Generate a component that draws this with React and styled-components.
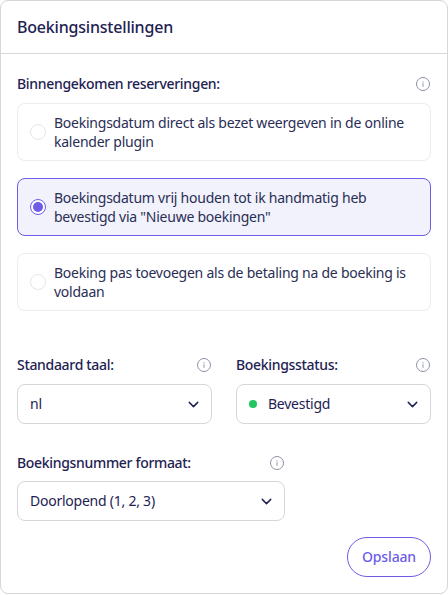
import styled, { createGlobalStyle } from 'styled-components'
import { ChevronDown } from 'lucide-react'

const Global = createGlobalStyle`
  * { box-sizing: border-box; }
  html, body { margin: 0; background: #fff; }
  body { font-family: "Noto Sans", sans-serif; color: #1e2252; letter-spacing: -0.24px; }
`
const Card = styled.div`
  width: 448px;
  height: 594px;
  border: 1px solid #d6d6da;
  border-radius: 8px;
  background: #fff;
  display: flex;
  flex-direction: column;
`
const Header = styled.div`
  height: 53px;
  padding: 0 16px;
  display: flex;
  align-items: center;
  border-bottom: 1px solid #d9d9dd;
  font-size: 16px;
  font-weight: 500;
  letter-spacing: -0.2px;
`
const Body = styled.div`
  flex: 1;
  padding: 19px 16px 0;
  display: flex;
  flex-direction: column;
`
const LabelRow = styled.div`
  height: 22px;
  width: ${p => p.$width || '100%'};
  padding-right: 1px;
  display: flex;
  align-items: center;
  justify-content: space-between;
  font-size: 14px;
  font-weight: 500;
  letter-spacing: -0.32px;
`
const LabelText = styled.span`
  margin-top: -1px;
`
const Options = styled.div`
  margin-top: 8px;
  display: flex;
  flex-direction: column;
  gap: 16.5px;
`
const Option = styled.div`
  height: 58.25px;
  padding: 0 12px;
  display: flex;
  align-items: center;
  gap: 8px;
  border: 1px solid ${p => (p.$active ? '#6c5ce7' : '#ececef')};
  border-radius: 8px;
  background: ${p => (p.$active ? '#f1f2fb' : '#fff')};
  font-size: 14px;
  line-height: 19px;
  color: #2a2e55;
`
const Radio = styled.span`
  flex: none;
  width: 16px;
  height: 16px;
  border-radius: 50%;
  border: 1px solid ${p => (p.$active ? '#6c5ce7' : '#e6e6ea')};
  background: #fff;
  display: flex;
  align-items: center;
  justify-content: center;
  &::after {
    content: '';
    width: 10px;
    height: 10px;
    border-radius: 50%;
    background: ${p => (p.$active ? '#6c5ce7' : 'transparent')};
  }
`
const Columns = styled.div`
  margin-top: 43.5px;
  display: grid;
  grid-template-columns: 195px 195px;
  gap: 24px;
`
const Field = styled.div`
  display: flex;
  flex-direction: column;
  gap: 8px;
`
const SecondField = styled(Field)`
  margin-top: 28px;
  gap: 7px;
`
const Select = styled.div`
  height: 40px;
  width: ${p => p.$width || '100%'};
  padding: 0 9px 0 12px;
  display: flex;
  align-items: center;
  gap: 11px;
  border: 1px solid #d6d6da;
  border-radius: 8px;
  font-size: 14px;
`
const Value = styled.span`
  flex: 1;
  margin-top: -2px;
`
const Dot = styled.span`
  width: 8px;
  height: 8px;
  border-radius: 50%;
  background: #22c55e;
`
const Footer = styled.div`
  margin-top: 16px;
  display: flex;
  justify-content: flex-end;
`
const SaveButton = styled.button`
  width: 84px;
  height: 40px;
  padding: 0 0 2px;
  border: 1px solid #6c5ce7;
  border-radius: 20px;
  background: #fff;
  color: #6c5ce7;
  font-family: inherit;
  font-size: 14px;
  font-weight: 500;
  letter-spacing: -0.15px;
`

const Info = () => (
  <svg width="14" height="14" viewBox="0 0 14 14" fill="none">
    <circle cx="7" cy="7" r="6.5" stroke="#8f92a8" />
    <rect x="6.4" y="6.2" width="1.2" height="3.6" fill="#a4a6b8" />
    <rect x="6.4" y="4.2" width="1.2" height="1.2" fill="#a4a6b8" />
  </svg>
)

const options = [
  'Boekingsdatum direct als bezet weergeven in de online kalender plugin',
  'Boekingsdatum vrij houden tot ik handmatig heb bevestigd via "Nieuwe boekingen"',
  'Boeking pas toevoegen als de betaling na de boeking is voldaan',
]

export default function App() {
  return (
    <>
      <Global />
      <Card>
        <Header>Boekingsinstellingen</Header>
        <Body>
          <LabelRow><LabelText>Binnengekomen reserveringen:</LabelText><Info /></LabelRow>
          <Options>
            {options.map((text, i) => (
              <Option key={text} $active={i === 1}>
                <Radio $active={i === 1} />
                <span>{text}</span>
              </Option>
            ))}
          </Options>
          <Columns>
            <Field>
              <LabelRow><LabelText>Standaard taal:</LabelText><Info /></LabelRow>
              <Select><Value>nl</Value><ChevronDown size={17} /></Select>
            </Field>
            <Field>
              <LabelRow><LabelText>Boekingsstatus:</LabelText><Info /></LabelRow>
              <Select><Dot /><Value>Bevestigd</Value><ChevronDown size={17} /></Select>
            </Field>
          </Columns>
          <SecondField>
            <LabelRow $width="268px"><LabelText>Boekingsnummer formaat:</LabelText><Info /></LabelRow>
            <Select $width="268px"><Value>Doorlopend (1, 2, 3)</Value><ChevronDown size={17} /></Select>
          </SecondField>
          <Footer><SaveButton>Opslaan</SaveButton></Footer>
        </Body>
      </Card>
    </>
  )
}
